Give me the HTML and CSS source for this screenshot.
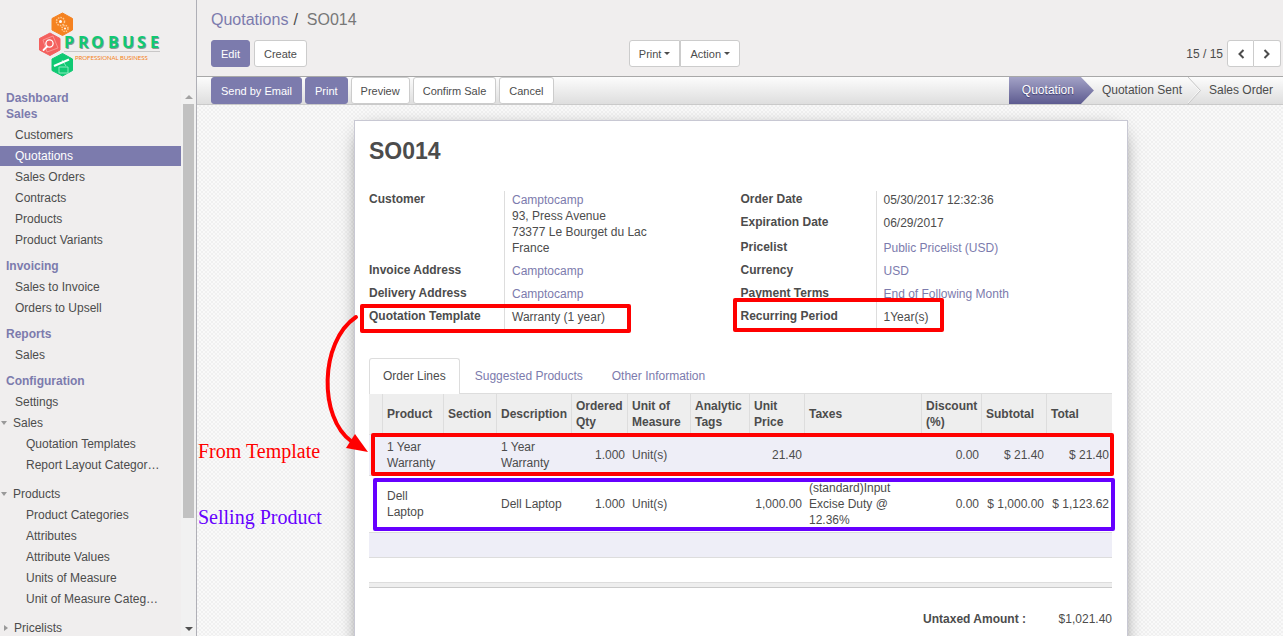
FILE: index.html
```html
<!DOCTYPE html>
<html lang="en">
<head>
<meta charset="utf-8">
<title>SO014 - Quotations</title>
<link rel="stylesheet" href="styles.css">
</head>
<body>
<div class="app">
  <aside class="sidebar">
    <a class="logo" href="#" aria-label="Probuse Professional Business">
      <svg width="130" height="70" viewBox="35 10 130 70">
        <g stroke-linejoin="round" stroke-width="1">
          <path d="M62.500 13 L72.500 18.500 V30 L62.500 35.500 L52 30 V18.500 Z" fill="#f58220" stroke="#f58220"/>
          <path d="M50 33 L60 38.500 V50 L50 55.500 L39.500 50 V38.500 Z" fill="#f4605e" stroke="#f4605e"/>
          <path d="M62.500 53.500 L72.500 59 V70.500 L62.500 76 L52 70.500 V59 Z" fill="#10c973" stroke="#10c973"/>
        </g>
        <g fill="none" stroke="#ffc78f">
          <circle cx="60.500" cy="21.500" r="4" stroke-width="1.500" stroke-dasharray="1.600 1"/>
          <circle cx="65" cy="28.500" r="3" stroke-width="1.500" stroke-dasharray="1.400 1"/>
        </g>
        <circle cx="60.500" cy="21.500" r="1.500" fill="#fff"/>
        <circle cx="65" cy="28.500" r="1" fill="#fff"/>
        <path d="M43 40 L53 36 L58 48 L47 52 Z" fill="none" stroke="#f9a3a0" stroke-width=".8"/>
        <circle cx="49.500" cy="43.500" r="3.600" fill="none" stroke="#fff" stroke-width="1.300"/>
        <path d="M47 46.500 L43.500 50" stroke="#fff" stroke-width="1.800" stroke-linecap="round"/>
        <path d="M62 60 L66 66 M59 67 H68 V73 H59 Z" fill="none" stroke="#8fe8c0" stroke-width="1"/>
        <path d="M54 66 L69 59.500" stroke="#fff" stroke-width="2.200"/>
        <path d="M64 51.500 H160" stroke="#c9c7c7"/>
        <text class="brand-shade" x="65 79 92 109 123 138 151" y="49">PROBUSE</text>
        <text class="brand" x="64 78 91 108 122 137 150" y="48">PROBUSE</text>
        <text class="tagline" x="75" y="60">PROFESSIONAL BUSINESS</text>
      </svg>
    </a>
    <div class="menu-scroll">
      <nav class="menu">
        <a class="menu-head" href="#">Dashboard</a>
        <section class="menu-section">
          <a class="menu-head" href="#">Sales</a>
          <ul>
            <li><a href="#">Customers</a></li>
            <li><a class="active" href="#" aria-current="page">Quotations</a></li>
            <li><a href="#">Sales Orders</a></li>
            <li><a href="#">Contracts</a></li>
            <li><a href="#">Products</a></li>
            <li><a href="#">Product Variants</a></li>
          </ul>
        </section>
        <section class="menu-section">
          <a class="menu-head" href="#">Invoicing</a>
          <ul>
            <li><a href="#">Sales to Invoice</a></li>
            <li><a href="#">Orders to Upsell</a></li>
          </ul>
        </section>
        <section class="menu-section">
          <a class="menu-head" href="#">Reports</a>
          <ul>
            <li><a href="#">Sales</a></li>
          </ul>
        </section>
        <section class="menu-section">
          <a class="menu-head" href="#">Configuration</a>
          <ul>
            <li><a href="#">Settings</a></li>
          </ul>
          <a class="menu-group open" href="#">Sales</a>
          <ul class="submenu">
            <li><a href="#">Quotation Templates</a></li>
            <li><a href="#">Report Layout Categor…</a></li>
          </ul>
          <a class="menu-group open" href="#">Products</a>
          <ul class="submenu">
            <li><a href="#">Product Categories</a></li>
            <li><a href="#">Attributes</a></li>
            <li><a href="#">Attribute Values</a></li>
            <li><a href="#">Units of Measure</a></li>
            <li><a href="#">Unit of Measure Categ…</a></li>
          </ul>
          <a class="menu-group" href="#">Pricelists</a>
        </section>
      </nav>
      <div class="scrollbar" aria-hidden="true">
        <span class="scroll-arrow up"></span>
        <span class="scroll-track"><span class="scroll-thumb"></span></span>
        <span class="scroll-arrow down"></span>
      </div>
    </div>
  </aside>

  <main class="main">
    <header class="control-panel">
      <nav class="breadcrumb"><a href="#">Quotations</a><span>/</span><span class="current">SO014</span></nav>
      <div class="control-row">
        <div class="control-left">
          <div class="buttons">
            <button class="btn primary" type="button">Edit</button>
            <button class="btn" type="button">Create</button>
          </div>
          <div class="dropdowns">
            <button class="btn drop" type="button">Print</button>
            <button class="btn drop" type="button">Action</button>
          </div>
        </div>
        <div class="pager">
          <span>15 / 15</span>
          <div class="pager-buttons">
            <button class="btn step" type="button" aria-label="Previous"><svg width="8" height="10" viewBox="0 0 8 10"><path d="M6.500 1 L2.500 5 L6.500 9"/></svg></button>
            <button class="btn step" type="button" aria-label="Next"><svg width="8" height="10" viewBox="0 0 8 10"><path d="M1.500 1 L5.500 5 L1.500 9"/></svg></button>
          </div>
        </div>
      </div>
    </header>

    <div class="statusbar">
      <div class="status-buttons">
        <button class="btn primary" type="button">Send by Email</button>
        <button class="btn primary" type="button">Print</button>
        <button class="btn" type="button">Preview</button>
        <button class="btn" type="button">Confirm Sale</button>
        <button class="btn" type="button">Cancel</button>
      </div>
      <ol class="stages">
        <li class="stage current">Quotation</li>
        <li class="stage">Quotation Sent<svg width="13" height="27" viewBox="0 0 13 27"><path class="chev-light" d="M-1 0 L11.500 13.500 L-1 27"/><path d="M0 0 L12.500 13.500 L0 27"/></svg></li>
        <li class="stage last">Sales Order</li>
      </ol>
    </div>

    <div class="form-area">
      <article class="sheet">
        <h1>SO014</h1>
        <div class="groups">
          <dl class="group">
            <dt>Customer</dt>
            <dd><a href="#">Camptocamp</a><br>93, Press Avenue<br>73377 Le Bourget du Lac<br>France</dd>
            <dt>Invoice Address</dt><dd><a href="#">Camptocamp</a></dd>
            <dt>Delivery Address</dt><dd><a href="#">Camptocamp</a></dd>
            <dt>Quotation Template</dt><dd>Warranty (1 year)</dd>
          </dl>
          <dl class="group">
            <dt>Order Date</dt><dd>05/30/2017 12:32:36</dd>
            <dt>Expiration Date</dt><dd class="roomy">06/29/2017</dd>
            <dt>Pricelist</dt><dd><a href="#">Public Pricelist (USD)</a></dd>
            <dt>Currency</dt><dd><a href="#">USD</a></dd>
            <dt>Payment Terms</dt><dd><a href="#">End of Following Month</a></dd>
            <dt>Recurring Period</dt><dd>1Year(s)</dd>
          </dl>
        </div>

        <nav class="tabs">
          <a class="active" href="#">Order Lines</a>
          <a href="#">Suggested Products</a>
          <a href="#">Other Information</a>
        </nav>

        <table class="lines">
          <colgroup>
            <col class="c-handle"><col class="c-product"><col class="c-section"><col class="c-desc"><col class="c-qty"><col class="c-uom"><col class="c-tags"><col class="c-price"><col><col class="c-disc"><col class="c-total"><col class="c-total">
          </colgroup>
          <thead>
            <tr><th></th><th>Product</th><th>Section</th><th>Description</th><th>Ordered Qty</th><th>Unit of Measure</th><th>Analytic Tags</th><th>Unit Price</th><th>Taxes</th><th>Discount (%)</th><th>Subtotal</th><th>Total</th></tr>
          </thead>
          <tbody>
            <tr class="row-two"><td></td><td>1 Year Warranty</td><td></td><td>1 Year Warranty</td><td class="num">1.000</td><td>Unit(s)</td><td></td><td class="num">21.40</td><td></td><td class="num">0.00</td><td class="num">$ 21.40</td><td class="num">$ 21.40</td></tr>
            <tr class="row-three"><td></td><td>Dell Laptop</td><td></td><td>Dell Laptop</td><td class="num">1.000</td><td>Unit(s)</td><td></td><td class="num">1,000.00</td><td>(standard)Input Excise Duty @ 12.36%</td><td class="num">0.00</td><td class="num">$ 1,000.00</td><td class="num">$ 1,123.62</td></tr>
            <tr class="row-empty"><td colspan="12"></td></tr>
            <tr class="row-empty"><td colspan="12"></td></tr>
          </tbody>
          <tfoot><tr><td colspan="12"></td></tr></tfoot>
        </table>

        <div class="totals">
          <span class="total-label">Untaxed Amount :</span>
          <span class="total-value">$1,021.40</span>
        </div>

        <svg class="notes" width="774" height="516" viewBox="354 120 774 516">
          <g fill="none" stroke-width="4" stroke-linejoin="round">
            <g stroke="#f00">
              <rect x="362" y="306" width="267" height="25"/>
              <rect x="735" y="300" width="207" height="30"/>
              <rect x="373" y="435" width="739" height="39"/>
              <path d="M356 317 C319 342 319 418 351 441" stroke-linecap="round"/>
            </g>
            <rect x="375" y="480" width="738" height="49" stroke="#60f"/>
          </g>
          <path d="M368 452 L355 434 L346 448 Z" fill="#f00"/>
          <text x="198" y="458" fill="#f00">From Template</text>
          <text x="198" y="524" fill="#60f">Selling Product</text>
        </svg>
      </article>
    </div>
  </main>
</div>
</body>
</html>
```
FILE: styles.css
```css
* { box-sizing: border-box; }

body {
  margin: 0;
  overflow: hidden;
  font: 12px/16px "Liberation Sans", Arial, sans-serif;
  color: #4c4c4c;
  background: #f0eeee;
}

a { color: #7c7bad; text-decoration: none; }
ul, ol, dl, dd { margin: 0; padding: 0; list-style: none; }

.app { display: flex; height: 100vh; }

/* Sidebar */
.sidebar {
  flex: none;
  display: flex;
  flex-direction: column;
  width: 197px;
  border-right: 1px solid #afafb6;
}
.logo { flex: none; height: 90px; padding: 10px 0 0 35px; }
.logo svg { display: block; }
.brand, .brand-shade { font: bold 16px "Open Sans", sans-serif; }
.brand { fill: #10c973; }
.brand-shade { fill: #8b9a93; }
.tagline { font: 6px Lato, sans-serif; fill: #f58220; }

.menu-scroll { flex: 1; display: flex; min-height: 0; }
.menu { flex: 1; min-width: 0; overflow: hidden; }
.menu a { display: block; color: #4c4c4c; white-space: nowrap; }
.menu .menu-head { padding-left: 6px; color: #7c7bad; font-weight: bold; }
.menu-section { margin-bottom: 8px; }
.menu-section ul { padding-top: 3px; }
.menu-section li { margin-bottom: 1px; }
.menu-section li a { padding-left: 15px; line-height: 20px; }
.menu-section li a.active { background: #7c7bad; color: #fff; }
.menu-section .submenu { padding: 1px 0 8px; }
.menu-section .submenu li a { padding-left: 26px; }
.menu .menu-group { display: flex; align-items: center; gap: 6px; padding-left: 4px; line-height: 20px; }
.menu-group::before {
  content: "";
  border: 3px solid transparent;
  border-left: 4px solid #999;
  border-right: 0;
}
.menu .menu-group.open { padding-left: 1px; }
.menu-group.open::before {
  border: 3px solid transparent;
  border-top: 4px solid #999;
  border-bottom: 0;
}

.scrollbar { flex: none; display: flex; flex-direction: column; width: 15px; background: #f1f1f1; }
.scroll-arrow { display: flex; align-items: center; justify-content: center; height: 14px; }
.scroll-arrow::before { content: ""; border: 4px solid transparent; }
.scroll-arrow.up::before { border-bottom-color: #a3a3a3; border-top: 0; }
.scroll-arrow.down::before { border-top-color: #505050; border-bottom: 0; }
.scroll-track { flex: 1; padding: 0 2px; }
.scroll-thumb { display: block; height: 80%; background: #c1c1c1; }

/* Control panel */
.main { flex: 1; display: flex; flex-direction: column; min-width: 0; overflow: hidden; }
.control-panel { flex: none; padding: 8px 2px 9px 14px; border-bottom: 1px solid #a8a8a8; }
.breadcrumb { display: flex; gap: 5px; margin-bottom: 8px; font-size: 16px; line-height: 24px; }
.breadcrumb .current { padding-left: 4px; color: #777; }
.control-row { display: grid; grid-template-columns: 1fr 1fr; }
.control-left { display: flex; justify-content: space-between; padding-right: 6px; }
.buttons, .status-buttons { display: flex; gap: 3px; }
.buttons { gap: 4px; }
.dropdowns, .pager-buttons { display: flex; }

.btn {
  height: 27px;
  padding: 0 9px;
  border: 1px solid #ccc;
  border-radius: 3px;
  background: #fff;
  color: #4c4c4c;
  font: 11px/16px "Liberation Sans", Arial, sans-serif;
  white-space: nowrap;
}
.btn.primary { border-color: #7c7bad; background: #7c7bad; color: #fff; }
.btn.drop { display: flex; align-items: center; gap: 3px; }
.btn.drop::after { content: ""; border: 3px solid transparent; border-top-color: #4c4c4c; border-bottom: 0; }
.dropdowns .btn:first-child, .pager-buttons .btn:first-child { border-radius: 3px 0 0 3px; }
.dropdowns .btn:last-child { border-radius: 0 3px 3px 0; }
.pager-buttons .btn:last-child { border-left: 0; border-radius: 0 3px 3px 0; }

.pager { display: flex; align-items: center; justify-content: flex-end; gap: 4px; }
.btn.step { display: flex; align-items: center; justify-content: center; width: 27px; padding: 0; }
.step path { fill: none; stroke: #4c4c4c; stroke-width: 2; }

/* Status bar */
.statusbar {
  flex: none;
  display: flex;
  justify-content: space-between;
  padding-left: 14px;
  border-bottom: 1px solid #cacaca;
  background: linear-gradient(#fcfcfc, #dedede);
}
.stages { display: flex; line-height: 27px; }
.stage { display: flex; gap: 6px; padding-left: 8px; }
.stage.last { padding-right: 10px; }
.stage.current {
  padding: 0 20px 0 13px;
  background: linear-gradient(#a3a2c6, #5d5b90);
  color: #fff;
  clip-path: polygon(0 0, calc(100% - 13px) 0, 100% 50%, calc(100% - 13px) 100%, 0 100%);
  text-shadow: 0 1px 1px #3d3b6e;
}
.stage path { fill: none; stroke: #c6c6c6; }
.stage .chev-light { stroke: #fafafa; }

/* Form */
.form-area {
  flex: 1;
  min-height: 0;
  padding: 15px 15px 0 17px;
  background: repeating-conic-gradient(#f0f0f0 0 25%, #f9f9f9 0 50%) 0 0 / 4px 4px;
}
.sheet {
  position: relative;
  max-width: 774px;
  min-height: 700px;
  margin: 0 auto;
  padding: 15px 15px 16px 14px;
  border: 1px solid #c8c8d3;
  background: #fff;
  box-shadow: 0 5px 20px -10px #000;
}
h1 { margin: 0 0 25px; font-size: 23px; line-height: 30px; }

.groups { display: grid; grid-template-columns: 1fr 1fr; align-items: start; margin-bottom: 27px; }
.group { display: grid; grid-template-columns: 135px 1fr; }
dt { font-weight: bold; }
dd { padding: 1px 0 6px 7px; border-left: 1px solid #ddd; }
dd.roomy { padding-bottom: 8px; }

.tabs { display: flex; gap: 1px; border-bottom: 1px solid #ddd; }
.tabs a { margin-bottom: -1px; padding: 9px 13px 10px; border: 1px solid transparent; border-bottom: 0; }
.tabs a.active {
  border-color: #ddd;
  border-radius: 3px 3px 0 0;
  background: #fff;
  color: #4c4c4c;
}

.lines { width: 100%; table-layout: fixed; border-collapse: separate; border-spacing: 0; }
.c-handle { width: 14px; }
.c-product { width: 61px; }
.c-section { width: 53px; }
.c-desc { width: 75px; }
.c-qty { width: 56px; }
.c-uom { width: 63px; }
.c-tags { width: 59px; }
.c-price { width: 55px; }
.c-disc { width: 60px; }
.c-total { width: 65px; }
.lines th {
  height: 40px;
  padding: 4px 2px 4px 4px;
  border-right: 1px solid #ddd;
  background: #eee;
  text-align: left;
  vertical-align: middle;
}
.lines th:last-child { border-right: 0; }
.lines td { padding: 0 3px 0 4px; border-top: 1px solid #ddd; }
.lines .num { text-align: right; white-space: nowrap; }
.lines tbody tr:nth-child(odd) { background: #eeeef7; }
.row-two td { height: 41px; }
.row-three td { height: 57px; }
.row-empty td { height: 25px; }
.lines tfoot td { height: 6px; border-bottom: 1px solid #cacaca; background: #eee; }

.totals { display: flex; justify-content: flex-end; margin-top: 23px; }
.total-label { font-weight: bold; }
.total-value { width: 86px; text-align: right; }

/* Callouts drawn over the form */
.notes { position: absolute; top: -1px; left: -1px; overflow: visible; pointer-events: none; }
.notes text { font: 20px "Liberation Serif", "Times New Roman", serif; }
```
